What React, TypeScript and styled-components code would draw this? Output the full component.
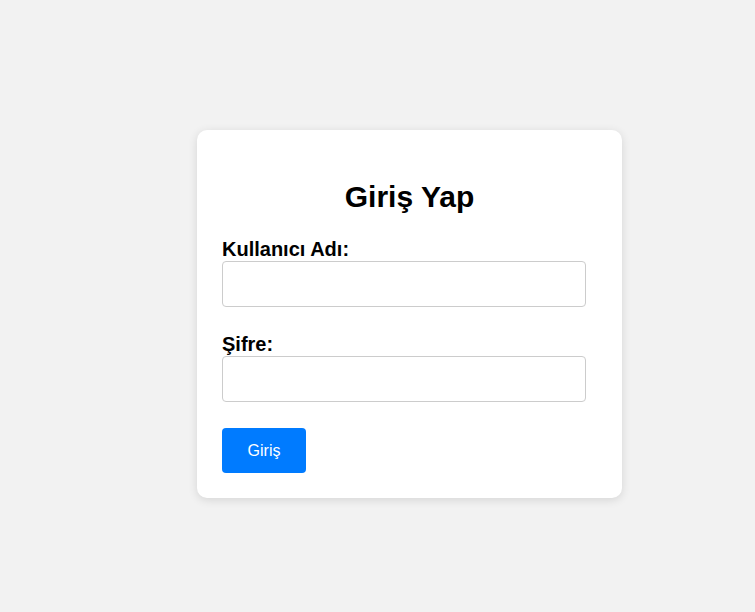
import React from "react";
import styled, { createGlobalStyle } from "styled-components";

const GlobalStyle = createGlobalStyle`
  html, body {
    margin: 0;
    padding: 0;
    background: #f2f2f2;
    font-family: "Liberation Sans", Arial, sans-serif;
  }
  * { box-sizing: border-box; }
`;

const Page = styled.div`
  min-height: 100vh;
  display: flex;
  align-items: flex-start;
  padding: 130px 0 0 197px;
`;

const Card = styled.form`
  width: 425px;
  background: #ffffff;
  border-radius: 10px;
  box-shadow: 0 2px 10px rgba(0, 0, 0, 0.12);
  padding: 25px;
  display: flex;
  flex-direction: column;
  align-items: flex-start;
`;

const Title = styled.h2`
  align-self: stretch;
  text-align: center;
  font-size: 30px;
  line-height: 34px;
  font-weight: bold;
  color: #000;
  margin: 25px 0 24px;
`;

const Field = styled.div`
  display: flex;
  flex-direction: column;
  margin-bottom: 26px;
`;

const Label = styled.label`
  font-size: 20px;
  line-height: 23px;
  font-weight: bold;
  color: #000;
`;

const Input = styled.input`
  width: 364px;
  height: 46px;
  border: 1px solid #cccccc;
  border-radius: 4px;
  padding: 0 10px;
  font-size: 16px;
  font-family: inherit;
  background: #fff;
  outline: none;
`;

const Button = styled.button`
  width: 84px;
  height: 45px;
  border: none;
  border-radius: 4px;
  background: #007bff;
  color: #ffffff;
  font-size: 16px;
  font-family: inherit;
  cursor: pointer;
  padding: 0;
`;

export default function App() {
  return (
    <>
      <GlobalStyle />
      <Page>
        <Card onSubmit={(e) => e.preventDefault()}>
          <Title>Giriş Yap</Title>
          <Field>
            <Label htmlFor="username">Kullanıcı Adı:</Label>
            <Input id="username" type="text" />
          </Field>
          <Field>
            <Label htmlFor="password">Şifre:</Label>
            <Input id="password" type="password" />
          </Field>
          <Button type="submit">Giriş</Button>
        </Card>
      </Page>
    </>
  );
}
